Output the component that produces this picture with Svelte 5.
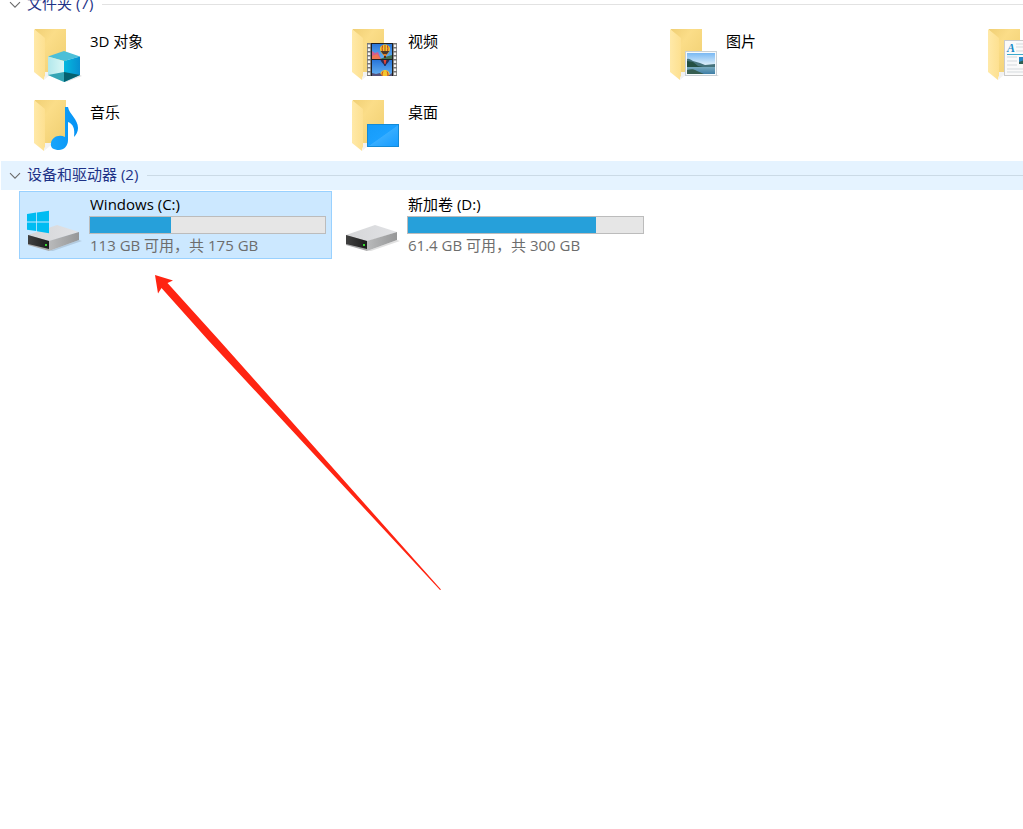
<script lang="ts">
	type Folder = { name: string; icon: string };
	type Drive = { name: string; free: string; used: number; system: boolean };

	const folders: Folder[] = [
		{ name: '3D 对象', icon: 'objects' },
		{ name: '视频', icon: 'videos' },
		{ name: '图片', icon: 'pictures' },
		{ name: '', icon: 'documents' },
		{ name: '音乐', icon: 'music' },
		{ name: '桌面', icon: 'desktop' }
	];

	const drives: Drive[] = [
		{ name: 'Windows (C:)', free: '113 GB 可用，共 175 GB', used: 34.5, system: true },
		{ name: '新加卷 (D:)', free: '61.4 GB 可用，共 300 GB', used: 80, system: false }
	];

	let selected = $state('Windows (C:)');
	let foldersOpen = $state(true);
	let drivesOpen = $state(true);
</script>

{#snippet chevron()}
	<svg class="chevron" viewBox="0 0 12 8" aria-hidden="true">
		<path d="M1 1.2L6 6.2L11 1.2" fill="none" stroke="#6b6b6b" stroke-width="1.1" />
	</svg>
{/snippet}

{#snippet folderIcon(kind: string)}
	<svg class="icon" viewBox="0 0 56 56" aria-hidden="true">
		<path d="M17 53l6-5h16v-3H18z" fill="#000" opacity=".05" />
		<path d="M8 2h31v43H8z" fill="url(#folder-back)" />
		<path d="M7 2l11 9v38c-1 1-1 2-1 4L7 45z" fill="url(#folder-flap)" />
		{#if kind === 'objects'}
			<path d="M37 55l16-7 2 1-16 6z" fill="#000" opacity=".12" />
			<path d="M37 24l16 5.500L37 34l-16-4.500z" fill="#4bbfd8" />
			<path d="M21 29.500L37 34v21l-16-7z" fill="url(#cube-left)" />
			<path d="M53 29.500L37 34v21l16-7z" fill="url(#cube-right)" />
			<path d="M21 48l16-3v10z" fill="#35a5b5" />
			<path d="M53 48l-16-3v10z" fill="#04606f" />
		{:else if kind === 'videos'}
			<rect x="22" y="16" width="30" height="33" fill="#777" />
			<path d="M24 17.500v31M50 17.500v31" stroke="#f4f4f4" stroke-width="2.400" stroke-dasharray="2.400 1.600" />
			<rect x="26" y="16" width="22" height="33" fill="#202020" />
			<rect x="27" y="17" width="20" height="15" fill="url(#film-sky)" />
			<rect x="27" y="33" width="20" height="16" fill="url(#film-sky)" />
			<path d="M27 24l3 2 3-1 3 7h-9z" fill="#cf5d92" />
			<path d="M27 29l5-2 4 5h-9z" fill="#ee7653" />
			<path d="M35 32l5-2 7-2v4z" fill="#3f6f52" />
			<path d="M35 22c0-6 10-6 10 0 0 3-3 5-4 7h-2c-1-2-4-4-4-7z" fill="#f3c62f" />
			<path d="M37.500 18.500c-1 4 0 7 2 10M42.500 18.500c1 4 0 7-2 10" fill="none" stroke="#c12b23" />
			<path d="M40 18v9" stroke="#8a3420" stroke-width=".8" />
			<path d="M35.500 24h9L42 27h-4z" fill="#4a382c" />
			<rect x="39" y="29" width="2" height="2" fill="#542c14" />
			<path d="M35.500 33h9c-1 3-3 3-4 6h-1c-1-3-3-3-4-6z" fill="#2c2c56" />
			<path d="M38.500 33h3l-1 4h-1z" fill="#e44432" />
			<path d="M35 49c0-8 10-8 10 0z" fill="#f3c62f" />
			<path d="M37 49c0-2 .2-3 1-4.500M43 49c0-2-.2-3-1-4.500" fill="none" stroke="#c12b23" />
			<path d="M27 46l4 1 4-1 2 3H27zM43 49l4-3v3z" fill="#55517a" />
		{:else if kind === 'pictures'}
			<path d="M24 49h32l-2-1H24z" fill="#000" opacity=".15" />
			<rect x="22.500" y="24.500" width="31" height="24" fill="#f6fafc" stroke="#c9d0d5" />
			<rect x="24" y="26" width="28" height="21" fill="url(#photo-sky)" />
			<path d="M24 32c2-1 4 1 6 2l7 2 5 2 10-1v5H24z" fill="#45727b" />
			<path d="M24 34l6 1 5 4 5 1h-4l-12 1z" fill="#234f42" />
			<path d="M24 40h28v7H24z" fill="url(#photo-water)" />
			<path d="M24 43c4-1 7-1 10 1l7 3H24z" fill="#365e51" />
		{:else if kind === 'documents'}
			<rect x="23.500" y="13.500" width="29" height="35" fill="#fafafa" stroke="#cbcbcb" />
			<text class="page-letter" x="26" y="25">A</text>
			<path d="M35 17h15M35 20h15M35 24h15M26 30h10M26 34h10M26 38h10M26 42h24M26 45h24" stroke="#d5dadd" />
			<path d="M26 27.500h24" stroke="#3ca9cc" />
			<rect x="38" y="30" width="12" height="7" fill="#2989c7" />
			<path d="M38 35l5-2 7 4H38z" fill="#315f50" />
		{:else if kind === 'music'}
			<path
				d="M38 9h3c1 7 10 12 10 21 0 4-2 7-4 9 1-9-1-13-6-15v18c0 6-4 10-9 10s-9-2-8-7c1-6 8-9 14-6z"
				fill="url(#note)"
			/>
		{:else if kind === 'desktop'}
			<rect x="22.500" y="26.500" width="31" height="22" fill="url(#screen)" stroke="#138ad6" />
		{/if}
	</svg>
{/snippet}

{#snippet driveIcon(system: boolean)}
	<svg class="icon" viewBox="0 0 56 56" aria-hidden="true">
		<path d="M22 53l30-11 3 1-29 10z" fill="#000" opacity=".12" />
		<path d="M30 27l22 7-30 9.500L1 37z" fill="url(#drive-top)" />
		<path d="M22 43l30-9v8L22 53z" fill="url(#drive-side)" />
		<path d="M1 37l21 6v10L1 47z" fill="#a9a9aa" />
		<path d="M1 37l21 6v8L1 46z" fill="url(#drive-front)" />
		<rect x="18" y="46" width="2" height="2" fill="#39dd33" />
		{#if system}
			<path
				d="M0 16l9.200-1.400v9H0zM10 14.500L22 12.700v10.900H10zM0 24.500h9.200v8.600L0 31.800zM10 24.500h12v10.700l-12-1.900z"
				fill="#00bcf2"
			/>
		{/if}
	</svg>
{/snippet}

<svg class="defs" width="0" height="0" aria-hidden="true">
	<defs>
		<linearGradient id="folder-back" x1="0" y1="0" x2="1" y2="1">
			<stop offset="0" stop-color="#f0cf75" />
			<stop offset=".35" stop-color="#fbdd88" />
			<stop offset="1" stop-color="#efce70" />
		</linearGradient>
		<linearGradient id="folder-flap" x1="0" y1="0" x2="1" y2="0">
			<stop offset="0" stop-color="#ffe9a8" />
			<stop offset="1" stop-color="#fde090" />
		</linearGradient>
		<linearGradient id="cube-left"><stop stop-color="#b2e8ec" /><stop offset="1" stop-color="#daf7f5" /></linearGradient>
		<linearGradient id="cube-right"><stop stop-color="#05b9df" /><stop offset="1" stop-color="#078fd0" /></linearGradient>
		<linearGradient id="film-sky" x1="0" y1="0" x2="0" y2="1">
			<stop stop-color="#2875d9" /><stop offset="1" stop-color="#68b4f3" />
		</linearGradient>
		<linearGradient id="photo-sky" x1="0" y1="0" x2="0" y2="1">
			<stop stop-color="#79b8f3" /><stop offset=".6" stop-color="#e4f3fb" />
		</linearGradient>
		<linearGradient id="photo-water" x1="0" y1="0" x2="0" y2="1">
			<stop stop-color="#78aabe" /><stop offset="1" stop-color="#3e7ea6" />
		</linearGradient>
		<linearGradient id="note"><stop stop-color="#18a5fb" /><stop offset="1" stop-color="#0593f5" /></linearGradient>
		<linearGradient id="screen" x1="0" y1="0" x2="1" y2="1">
			<stop stop-color="#159bf9" /><stop offset=".5" stop-color="#1ba1ff" />
			<stop offset=".52" stop-color="#36adff" /><stop offset="1" stop-color="#169bff" />
		</linearGradient>
		<linearGradient id="drive-top"><stop stop-color="#d5d6d8" /><stop offset="1" stop-color="#e1e2e5" /></linearGradient>
		<linearGradient id="drive-side"><stop stop-color="#b9babb" /><stop offset="1" stop-color="#969798" /></linearGradient>
		<linearGradient id="drive-front"><stop stop-color="#404040" /><stop offset="1" stop-color="#1d1d1d" /></linearGradient>
	</defs>
</svg>

<main class="explorer" lang="zh-CN">
	<section>
		<button class="group" aria-expanded={foldersOpen} onclick={() => (foldersOpen = !foldersOpen)}>
			{@render chevron()}
			<span class="title">文件夹 (7)</span>
			<span class="rule"></span>
		</button>
		{#if foldersOpen}
			<div class="tiles">
				{#each folders as folder}
					<button
						class="tile"
						class:selected={selected === folder.icon}
						onclick={() => (selected = folder.icon)}
					>
						{@render folderIcon(folder.icon)}
						<span class="details folder-name">{folder.name}</span>
					</button>
				{/each}
			</div>
		{/if}
	</section>

	<section>
		<button class="group active" aria-expanded={drivesOpen} onclick={() => (drivesOpen = !drivesOpen)}>
			{@render chevron()}
			<span class="title">设备和驱动器 (2)</span>
			<span class="rule"></span>
		</button>
		{#if drivesOpen}
			<div class="tiles">
				{#each drives as drive}
					<button
						class="tile"
						class:selected={selected === drive.name}
						onclick={() => (selected = drive.name)}
					>
						{@render driveIcon(drive.system)}
						<span class="details">
							<span class="line">{drive.name}</span>
							<progress value={drive.used} max="100" aria-label={drive.name}></progress>
							<span class="line free">{drive.free}</span>
						</span>
					</button>
				{/each}
			</div>
		{/if}
	</section>

	<svg class="arrow" viewBox="0 0 290 320" aria-hidden="true">
		<path d="M3 3L21 8.500L15.500 11L67 68L289 317.500L288 318L56 68L9.500 16L6 21.500z" fill="#ff2412" />
	</svg>
</main>

<style>
	:global(body) {
		margin: 0;
		background: #fff;
	}

	.defs {
		position: absolute;
	}

	.explorer {
		position: relative;
		min-height: 100vh;
		box-sizing: border-box;
		overflow: hidden;
		background: #fff;
		color: #000;
		font-family: 'Open Sans', 'Noto Sans CJK SC', sans-serif;
		font-size: 15px;
		line-height: 20px;
	}

	/* the list is scrolled a little past its first heading */
	section:first-child {
		margin-top: -10px;
	}

	button {
		margin: 0;
		border: 0;
		background: none;
		color: inherit;
		font: inherit;
		text-align: left;
	}

	.group {
		display: flex;
		align-items: center;
		width: calc(100% - 1px);
		height: 29px;
		margin-left: 1px;
		padding: 0 0 0 8px;
		color: #1e3287;
		white-space: nowrap;
	}

	.group.active {
		background: #e5f3ff;
	}

	.chevron {
		width: 12px;
		height: 8px;
		margin-right: 6px;
	}

	.title {
		padding-bottom: 4px;
	}

	.rule {
		flex: 1;
		height: 1px;
		margin-left: 9px;
		background: #e2e2e2;
	}

	.active .rule {
		background: #cbdae6;
	}

	.tiles {
		display: grid;
		grid-template-columns: repeat(4, 313px);
		gap: 3px 5px;
		padding: 1px 0 2px 19px;
	}

	.tile {
		display: flex;
		align-items: flex-start;
		box-sizing: border-box;
		height: 68px;
		padding: 0 5px 0 7px;
		border: 1px solid transparent;
	}

	.tile.selected {
		border-color: #99d1ff;
		background: #cce8ff;
	}

	.icon {
		flex-shrink: 0;
		width: 56px;
		height: 56px;
		margin: 6px 6px 0 0;
	}

	.page-letter {
		fill: #168ac8;
		font: italic bold 12px 'Liberation Serif', serif;
	}

	.details {
		display: flex;
		flex: 1;
		flex-direction: column;
		padding-top: 2px;
	}

	.folder-name {
		padding: 10px 0 0 1px;
	}

	.line {
		padding-left: 1px;
		white-space: nowrap;
	}

	.free {
		color: #6d6d6d;
	}

	progress {
		appearance: none;
		display: block;
		box-sizing: border-box;
		width: 100%;
		height: 18px;
		margin: 2px 0 1px;
		border: 1px solid #bcbcbc;
		background: #e6e6e6;
	}

	progress::-webkit-progress-bar {
		background: #e6e6e6;
	}

	progress::-webkit-progress-value {
		background: #26a0da;
	}

	.arrow {
		position: absolute;
		top: 272px;
		left: 152px;
		width: 290px;
		height: 320px;
		pointer-events: none;
	}
</style>
